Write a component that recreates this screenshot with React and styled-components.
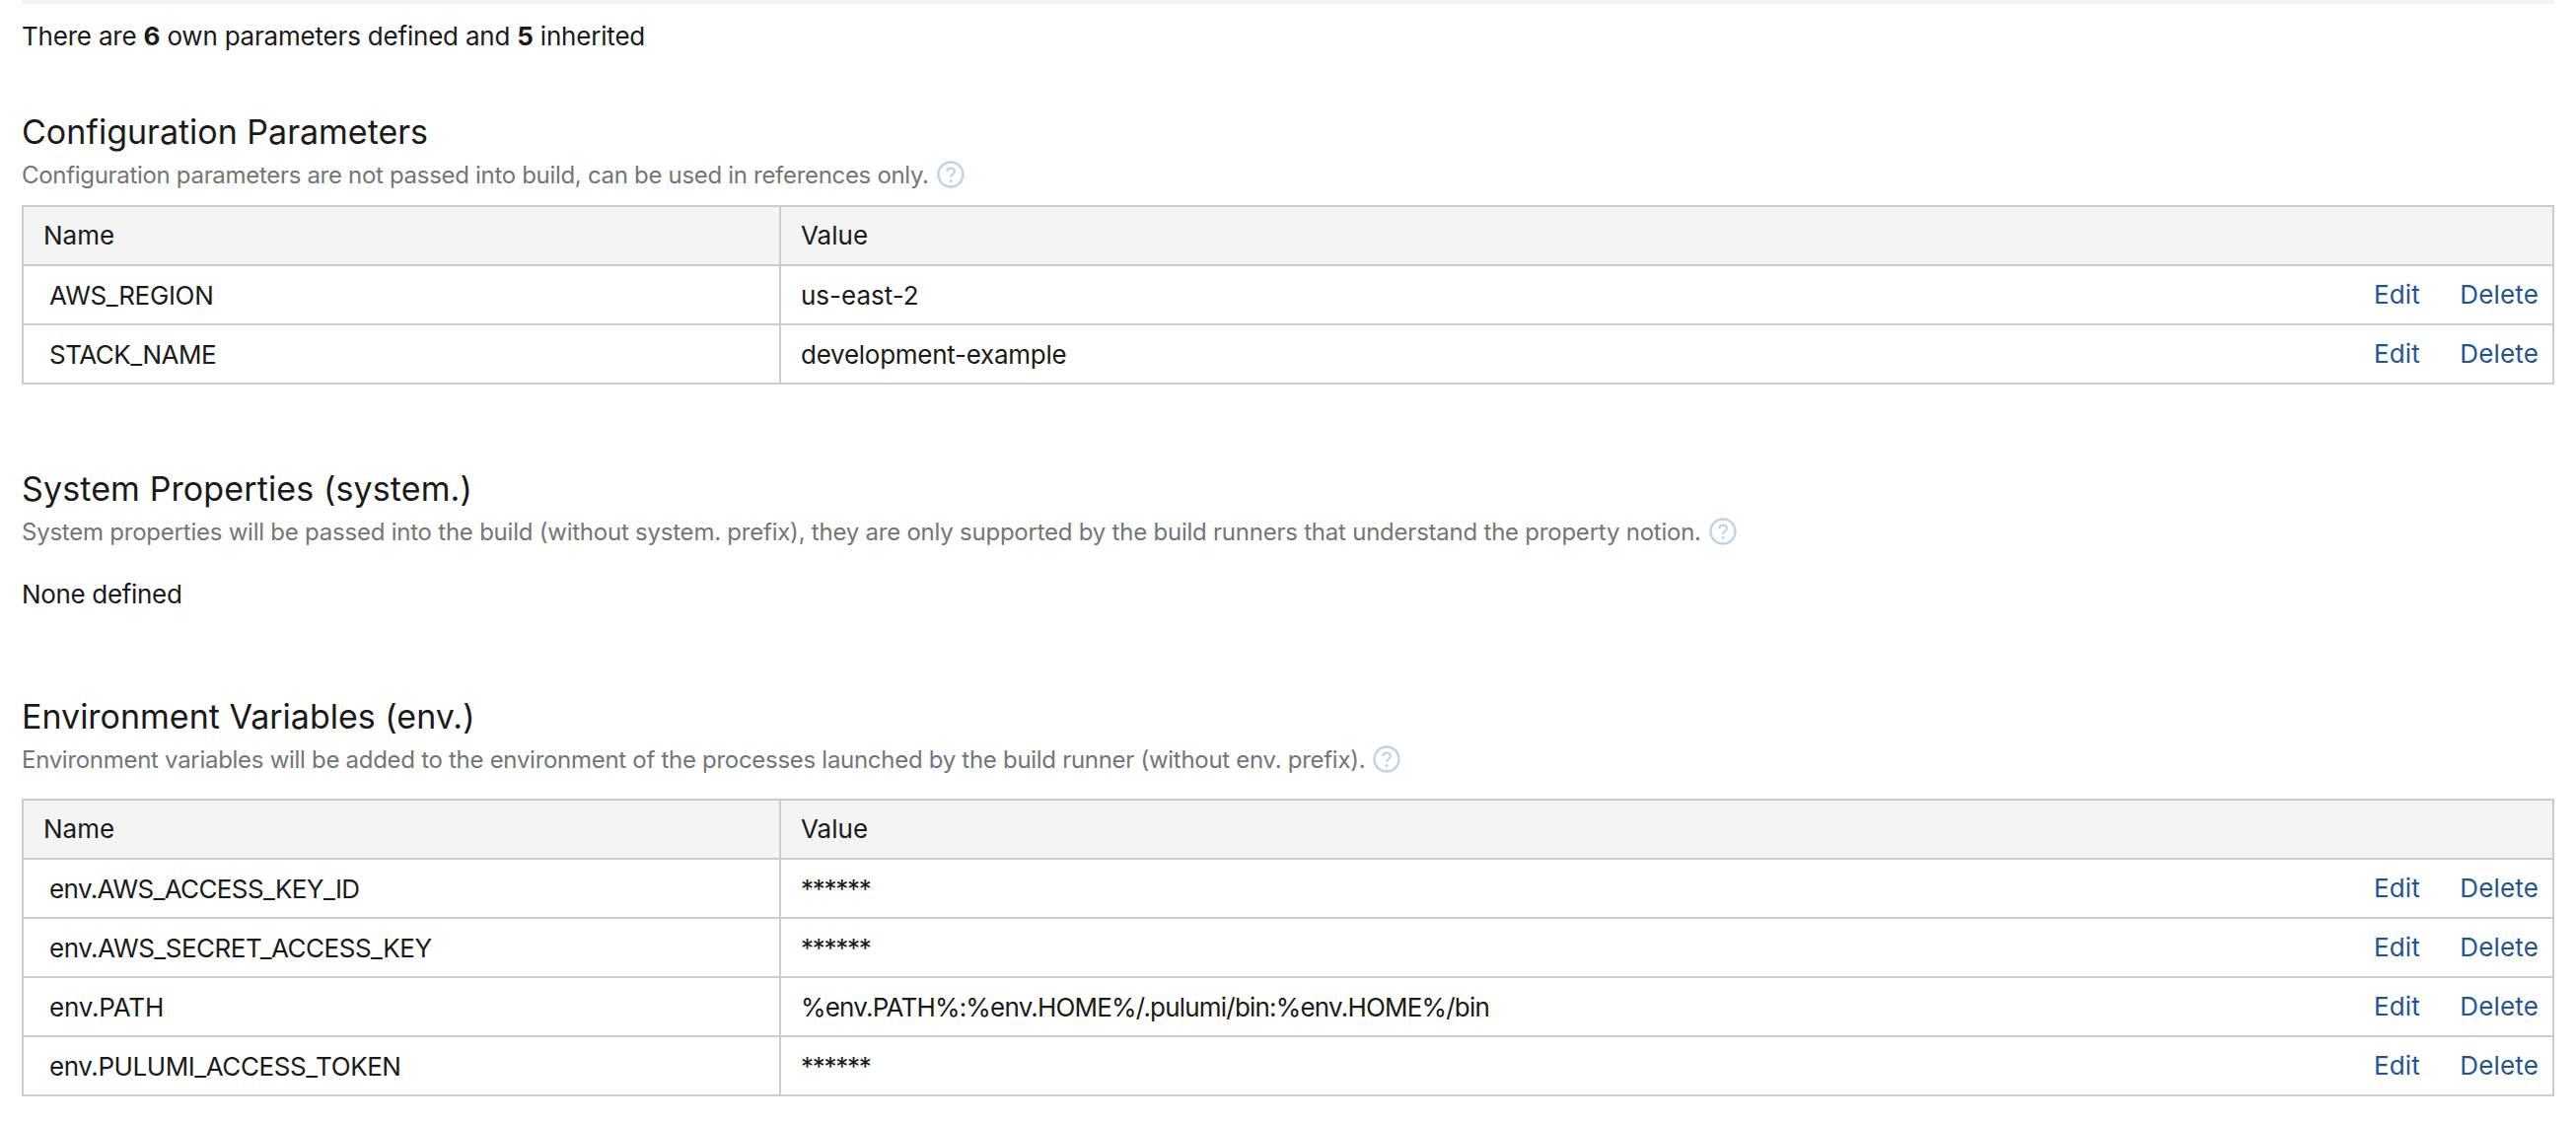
import React from "react";
import styled, { createGlobalStyle } from "styled-components";

// track = letter-spacing per text, the reference font runs narrower than Inter
const configParams = [
  { name: "AWS_REGION", nameTrack: -0.33, value: "us-east-2", valueTrack: 0 },
  { name: "STACK_NAME", nameTrack: -0.5, value: "development-example", valueTrack: -0.26 },
];

const envVars = [
  { name: "env.AWS_ACCESS_KEY_ID", nameTrack: -0.63, value: "******", valueTrack: -1.3 },
  { name: "env.AWS_SECRET_ACCESS_KEY", nameTrack: -0.5, value: "******", valueTrack: -1.3 },
  {
    name: "env.PATH",
    nameTrack: -0.2,
    value: "%env.PATH%:%env.HOME%/.pulumi/bin:%env.HOME%/bin",
    valueTrack: -0.8,
  },
  { name: "env.PULUMI_ACCESS_TOKEN", nameTrack: -0.43, value: "******", valueTrack: -1.3 },
];

function HelpIcon() {
  return (
    <StHelp viewBox="0 0 28 28" aria-hidden="true">
      <circle cx="14" cy="14" r="12.5" fill="none" stroke="#bcd4e8" strokeWidth="2.4" />
      <path
        d="M10.2 11c.3-2.2 1.9-3.4 3.9-3.4 2.2 0 3.8 1.3 3.8 3.2 0 1.5-.8 2.3-2 3.1-1.2.8-1.8 1.4-1.8 2.9"
        fill="none"
        stroke="#bcd4e8"
        strokeWidth="2.2"
      />
      <circle cx="14.1" cy="20.4" r="1.5" fill="#bcd4e8" />
    </StHelp>
  );
}

function ParamTable({ rows, top }) {
  return (
    <StTable $top={top}>
      <colgroup>
        <col style={{ width: "768px" }} />
        <col />
        <col style={{ width: "84px" }} />
        <col style={{ width: "100px" }} />
      </colgroup>
      <thead>
        <tr>
          <StHead>Name</StHead>
          <StHead colSpan={3}>Value</StHead>
        </tr>
      </thead>
      <tbody>
        {rows.map((row) => (
          <tr key={row.name}>
            <StNameCell $track={row.nameTrack}>{row.name}</StNameCell>
            <StValueCell $track={row.valueTrack}>{row.value}</StValueCell>
            <StEditCell>
              <StLink href="#">Edit</StLink>
            </StEditCell>
            <StDeleteCell>
              <StLink href="#">Delete</StLink>
            </StDeleteCell>
          </tr>
        ))}
      </tbody>
    </StTable>
  );
}

export default function App() {
  return (
    <StPage>
      <GlobalStyle />
      <StTopBar />
      <StSummary>
        There are <b>6</b> own parameters defined and <b>5</b> inherited
      </StSummary>

      <StTitle $top={55}>Configuration Parameters</StTitle>
      <StNote $track={-0.31}>
        Configuration parameters are not passed into build, can be used in references only.
        <HelpIcon />
      </StNote>
      <ParamTable rows={configParams} top={11} />

      <StTitle $top={84} $track={0.12}>
        System Properties (system.)
      </StTitle>
      <StNote $track={-0.23}>
        System properties will be passed into the build (without system. prefix), they are only
        supported by the build runners that understand the property notion.
        <HelpIcon />
      </StNote>
      <StNone>None defined</StNone>

      <StTitle $top={82}>Environment Variables (env.)</StTitle>
      <StNote $track={-0.29}>
        Environment variables will be added to the environment of the processes launched by the
        build runner (without env. prefix).
        <HelpIcon />
      </StNote>
      <ParamTable rows={envVars} top={20} />
    </StPage>
  );
}

const GlobalStyle = createGlobalStyle`
  html, body {
    margin: 0;
    background: #fff;
  }
  body {
    font-family: Inter, "Liberation Sans", sans-serif;
    color: #1a1a1a;
  }
`;

const StPage = styled.div`
  width: 2568px;
  padding-left: 22px;
  height: 1138px;
  overflow: hidden;
`;

const StTopBar = styled.div`
  height: 4px;
  background: #f4f4f4;
`;

const StSummary = styled.p`
  margin: 13px 0 0;
  font-size: 26px;
  line-height: 40px;
  letter-spacing: -0.2px;
  b {
    font-weight: 700;
  }
`;

const StTitle = styled.h2`
  margin: ${({ $top }) => $top}px 0 0;
  font-size: 34px;
  line-height: 44px;
  font-weight: 400;
  letter-spacing: ${({ $track }) => $track || 0}px;
`;

const StNote = styled.div`
  display: flex;
  align-items: center;
  gap: 8px;
  margin-top: 1px;
  height: 40px;
  font-size: 24px;
  letter-spacing: ${({ $track }) => $track}px;
  color: #737577;
`;

const StHelp = styled.svg`
  width: 28px;
  height: 28px;
  flex: none;
`;

const StTable = styled.table`
  width: 100%;
  margin-top: ${({ $top }) => $top}px;
  border-collapse: collapse;
  table-layout: fixed;
  border: 2px solid #ccc;
  font-size: 26px;
`;

const StHead = styled.th`
  height: 56px;
  padding: 0 20px 2px;
  background: #f4f4f4;
  border: 2px solid #ccc;
  text-align: left;
  font-weight: 400;
`;

const StNameCell = styled.td`
  height: 58px;
  padding: 0 26px;
  border: 2px solid #ccc;
  letter-spacing: ${({ $track }) => $track}px;
`;

const StValueCell = styled.td`
  padding: 0 20px;
  border: 2px solid #ccc;
  border-right: 0;
  letter-spacing: ${({ $track }) => $track}px;
`;

const StEditCell = styled.td`
  padding: 0 0 2px 2px;
  border-top: 2px solid #ccc;
  border-bottom: 2px solid #ccc;
`;

const StDeleteCell = styled.td`
  padding: 0 14px 2px 0;
  text-align: right;
  border-top: 2px solid #ccc;
  border-bottom: 2px solid #ccc;
`;

const StLink = styled.a`
  color: #1f5596;
  text-decoration: none;
  letter-spacing: 0.15px;
`;

const StNone = styled.p`
  margin: 24px 0 0;
  font-size: 26px;
  line-height: 40px;
  letter-spacing: -0.33px;
`;
